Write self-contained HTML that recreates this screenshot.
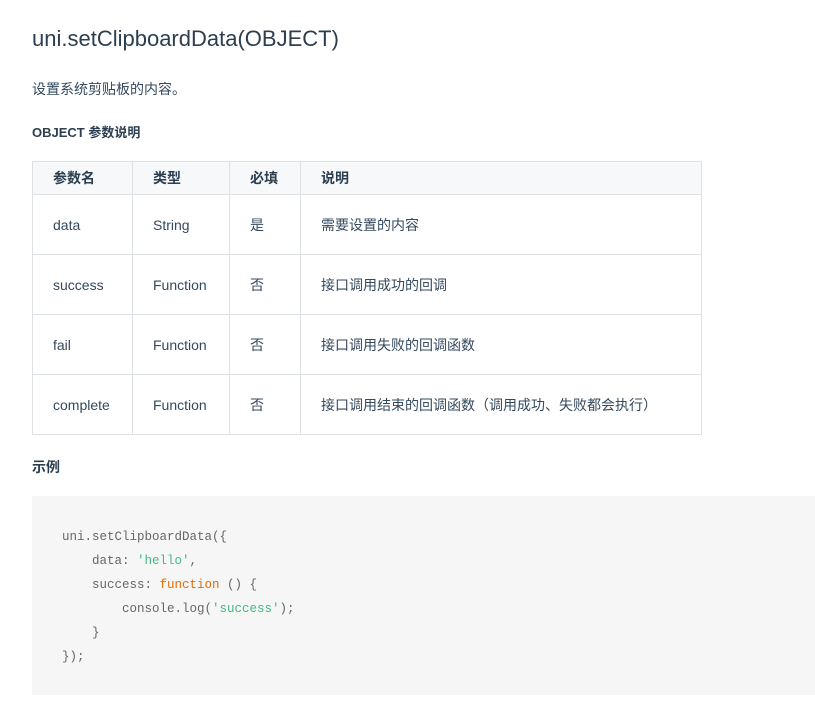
<!DOCTYPE html>
<html><head><meta charset="utf-8"><style>
body{margin:0;background:#fff;font-family:"Liberation Sans","Noto Sans CJK SC",sans-serif;color:#2c3e50;width:815px;height:724px;overflow:hidden;position:relative}
.a{position:absolute;white-space:nowrap}
h1{position:absolute;left:32px;top:26px;margin:0;font-size:22px;font-weight:normal;color:#2c3e50}
table{position:absolute;left:32px;top:161px;border-collapse:collapse;font-size:14px;color:#34495e}
td,th{border:1px solid #dfe2e5;padding:0 0 0 20px;text-align:left}
th{height:32px;background:#f6f8fa;font-weight:bold;color:#2c3e50}
td{height:59px}
pre{position:absolute;left:32px;top:496px;width:783px;height:199px;margin:0;background:#f6f6f6;box-sizing:border-box;padding:29px 0 0 30px;font-family:"Liberation Mono",monospace;font-size:12.5px;line-height:24px;color:#666}
.s{color:#42b983}.k{color:#e96900}
</style></head><body>
<h1>uni.setClipboardData(OBJECT)</h1>
<div class="a" style="left:32px;top:79px;font-size:14px;color:#34495e">设置系统剪贴板的内容。</div>
<div class="a" style="left:32px;top:122px;font-size:13px;font-weight:bold">OBJECT 参数说明</div>
<table>
<tr><th style="width:79px">参数名</th><th style="width:76px">类型</th><th style="width:50px">必填</th><th style="width:380px">说明</th></tr>
<tr><td>data</td><td>String</td><td>是</td><td>需要设置的内容</td></tr>
<tr><td>success</td><td>Function</td><td>否</td><td>接口调用成功的回调</td></tr>
<tr><td>fail</td><td>Function</td><td>否</td><td>接口调用失败的回调函数</td></tr>
<tr><td>complete</td><td>Function</td><td>否</td><td>接口调用结束的回调函数（调用成功、失败都会执行）</td></tr>
</table>
<div class="a" style="left:32px;top:457px;font-size:14px;font-weight:bold">示例</div>
<pre>uni.setClipboardData({
    data: <span class="s">'hello'</span>,
    success: <span class="k">function</span> () {
        console.log(<span class="s">'success'</span>);
    }
});</pre>
</body></html>
